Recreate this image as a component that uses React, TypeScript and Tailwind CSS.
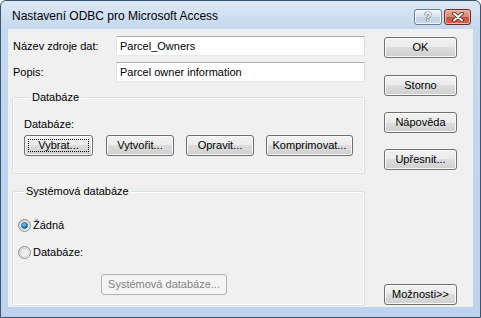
import React from "react";

const btnBase =
  "relative flex h-[21px] items-center justify-center rounded-[3px] border text-[11px] leading-none";
const btnNormal =
  "border-[#707070] bg-[linear-gradient(#f2f2f2_0%,#ebebeb_50%,#dddddd_50%,#cfcfcf_100%)] shadow-[inset_0_0_0_1px_#fbfbfb] text-black";

interface ButtonProps {
  children: React.ReactNode;
  className?: string;
  focused?: boolean;
  disabled?: boolean;
}

const WinButton = ({ children, className = "", focused, disabled }: ButtonProps) => {
  if (disabled) {
    return (
      <div
        className={`${btnBase} border-[#adb2b5] bg-[#f4f4f4] text-[#838383] ${className}`}
      >
        {children}
      </div>
    );
  }
  return (
    <div
      className={`${btnBase} ${btnNormal} ${
        focused ? "border-[#3c7fb1] shadow-[inset_0_0_0_1px_#9ad0f2]" : ""
      } ${className}`}
    >
      {focused && (
        <span className="absolute inset-[3px] border border-dotted border-black" />
      )}
      <span className="relative">{children}</span>
    </div>
  );
};

const TextBox = ({ value }: { value: string }) => (
  <div className="flex h-[20px] flex-1 items-center border border-[#abadb3] border-b-[#e3e9ef] border-l-[#e2e3ea] border-r-[#dbdfe6] bg-white pl-[3px] text-[11px]">
    {value}
  </div>
);

const Radio = ({ checked, id }: { checked?: boolean; id: string }) => (
  <svg width="13" height="13" viewBox="0 0 13 13" className="mr-[2px] shrink-0">
    <defs>
      <linearGradient id={`rb-${id}`} x1="0" y1="0" x2="1" y2="1">
        <stop offset="0" stopColor="#dcdcdc" />
        <stop offset="1" stopColor="#fefefe" />
      </linearGradient>
      <radialGradient id={`rd-${id}`} cx="0.4" cy="0.35" r="0.7">
        <stop offset="0" stopColor="#8ad1fb" />
        <stop offset="0.6" stopColor="#2a80c0" />
        <stop offset="1" stopColor="#14507f" />
      </radialGradient>
    </defs>
    <circle cx="6.5" cy="6.5" r="6" fill={`url(#rb-${id})`} stroke="#8e8f8f" />
    <circle cx="6.5" cy="6.5" r="4.5" fill="none" stroke="#c6c6c6" strokeWidth="0.8" />
    {checked && (
      <circle cx="6.5" cy="6.5" r="3" fill={`url(#rd-${id})`} stroke="#1b4f7a" strokeWidth="0.6" />
    )}
  </svg>
);

const GroupBox = ({
  title,
  className = "",
  children,
}: {
  title: string;
  className?: string;
  children: React.ReactNode;
}) => (
  <fieldset
    className={`rounded-[3px] border border-[#d5dfe5] shadow-[inset_0_0_0_1px_#ffffff] ${className}`}
  >
    <legend className="ml-[6px] bg-[#f0f0f0] px-[2px] text-[11px] leading-[14px]">
      {title}
    </legend>
    {children}
  </fieldset>
);

export default function App() {
  return (
    <div className="flex h-[318px] w-[481px] flex-col rounded-t-[6px] border border-[#3a5670] bg-[linear-gradient(#dce8f6,#c4d8ef_28px,#bdd3ec)] font-['Liberation_Sans',Arial,sans-serif] text-black">
      {/* title bar */}
      <div className="flex h-[28px] pl-[11px] pr-[9px]">
        <div className="flex h-full flex-1 items-center pt-[1px] text-[12px]">
          Nastavení ODBC pro Microsoft Access
        </div>
        <div className="mt-[8px] flex h-[16px] gap-[2px]">
          <div className="flex w-[28px] items-center justify-center rounded-[3px] border border-[#6a7c93] bg-[linear-gradient(#eef3f9_0%,#d8e3f0_50%,#c3d3e6_50%,#cbd9ea_100%)] shadow-[inset_0_0_0_1px_#f4f8fc]">
            <span className="text-[12px] font-bold leading-none text-white [text-shadow:0_0_1px_#3d4d63,0_0_1px_#3d4d63,0_0_1px_#3d4d63]">
              ?
            </span>
          </div>
          <div className="flex w-[27px] items-center justify-center rounded-[3px] border border-[#6e2d22] bg-[linear-gradient(#e9a99a_0%,#d88672_50%,#c55339_50%,#d0694c_100%)] shadow-[inset_0_0_0_1px_#eebcae]">
            <svg width="12" height="10" viewBox="0 0 12 10">
              <path d="M2 1.5 L10 8.5 M10 1.5 L2 8.5" stroke="#4a1a12" strokeWidth="3.6" strokeLinecap="round" />
              <path d="M2 1.5 L10 8.5 M10 1.5 L2 8.5" stroke="#ffffff" strokeWidth="2" strokeLinecap="round" />
            </svg>
          </div>
        </div>
      </div>

      {/* client area */}
      <div className="mx-[7px] mb-[10px] flex flex-1 bg-[#f0f0f0] pl-[4px] pr-[16px] pb-[1px] text-[11px]">
        {/* left column */}
        <div className="flex w-[353px] flex-col pt-[7px]">
          <div className="flex items-center">
            <span className="ml-[1px] w-[103px]">Název zdroje dat:</span>
            <TextBox value="Parcel_Owners" />
          </div>
          <div className="mt-[6px] flex items-center">
            <span className="ml-[1px] w-[103px]">Popis:</span>
            <TextBox value="Parcel owner information" />
          </div>

          <GroupBox title="Databáze" className="mt-[8px] h-[84px] pl-[11px]">
            <div className="mt-[13px] leading-[14px]">Databáze:</div>
            <div className="mt-[4px] flex">
              <WinButton focused className="w-[69px]">
                Vybrat...
              </WinButton>
              <WinButton className="ml-[13px] w-[68px]">Vytvořit...</WinButton>
              <WinButton className="ml-[12px] w-[68px]">Opravit...</WinButton>
              <WinButton className="ml-[12px] w-[87px]">Komprimovat...</WinButton>
            </div>
          </GroupBox>

          <GroupBox title="Systémová databáze" className="mt-[10px] flex-1 pl-[5px]">
            <div className="mt-[20px] flex h-[14px] items-center">
              <Radio checked id="a" />
              <span>Žádná</span>
            </div>
            <div className="mt-[13px] flex h-[14px] items-center">
              <Radio id="b" />
              <span>Databáze:</span>
            </div>
            <WinButton disabled className="ml-[83px] mt-[15px] w-[126px]">
              Systémová databáze...
            </WinButton>
          </GroupBox>
        </div>

        {/* right column */}
        <div className="ml-[19px] flex w-[73px] flex-col pt-[8px] pb-[1px]">
          <WinButton>OK</WinButton>
          <WinButton className="mt-[17px]">Storno</WinButton>
          <WinButton className="mt-[16px]">Nápověda</WinButton>
          <WinButton className="mt-[16px]">Upřesnit...</WinButton>
          <WinButton className="mt-auto">Možnosti&gt;&gt;</WinButton>
        </div>
      </div>
    </div>
  );
}
